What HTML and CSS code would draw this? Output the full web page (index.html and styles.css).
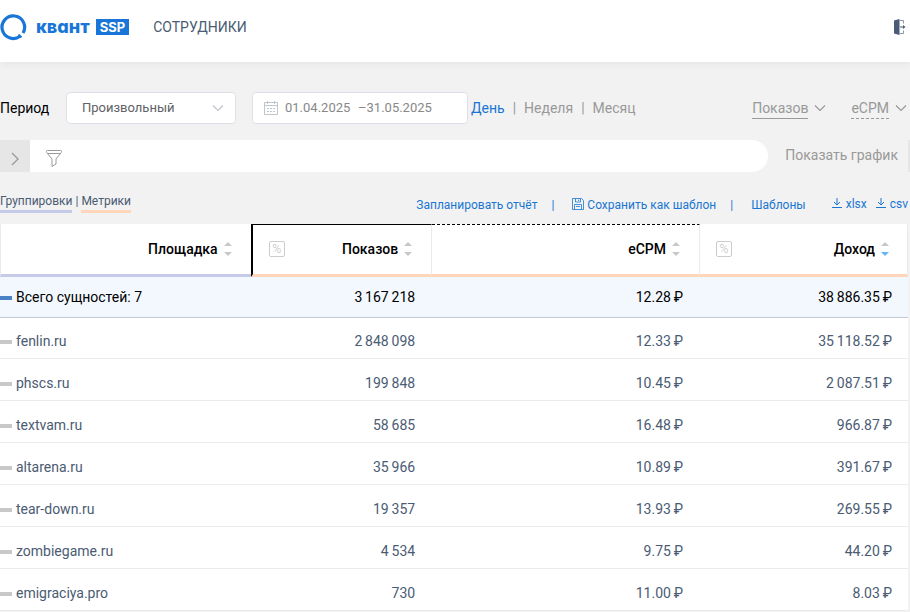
FILE: index.html
```html
<!DOCTYPE html>
<html lang="ru">
<head>
  <meta charset="utf-8">
  <title>Квант SSP</title>
  <meta name="viewport" content="width=device-width, initial-scale=1">
  <link rel="stylesheet" href="styles.css">
</head>
<body>
  <svg width="0" height="0" class="sprite" aria-hidden="true">
    <symbol id="chevron" viewBox="0 0 12 8"><path d="M1 1.5l5 5 5-5" fill="none" stroke="currentColor" stroke-width="1.200"/></symbol>
    <symbol id="download" viewBox="0 0 10 10"><path d="M5 0v7M2 4l3 3 3-3M0 9.500h10" fill="none" stroke="currentColor"/></symbol>
    <symbol id="sort" viewBox="0 0 8 14"><path class="up" d="M0 4L4 0l4 4z"/><path class="down" d="M0 10L4 14l4-4z"/></symbol>
  </svg>

  <header class="header">
    <a href="#" class="logo">
      <svg width="27" height="27" viewBox="0 0 27 27" aria-hidden="true">
        <path d="M20 22.300A11.300 11.300 0 1 1 23 19" fill="none" stroke="#1976d8" stroke-width="3.200"/>
        <path d="M18.500 20.500l3 3" stroke="#1976d8" stroke-width="2"/>
      </svg>
      <span class="logo-name">квɑнт</span>
      <span class="logo-tag">SSP</span>
    </a>
    <a href="#" class="nav-link">СОТРУДНИКИ</a>
    <button class="logout" aria-label="Выйти">
      <svg width="12" height="16" viewBox="0 0 12 16">
        <path d="M0 1.500L5.500 0v16L0 14.500z" fill="#4a5b78"/>
        <path d="M6 1.500h3.500v3M6 14.500h3.500v-3" fill="none" stroke="#8b95a8"/>
        <path d="M6 8h4" stroke="#4a5b78"/>
        <path d="M9 6l2.500 2L9 10z" fill="#4a5b78"/>
      </svg>
    </button>
  </header>

  <main>
    <form class="filters">
      <label for="period">Период</label>
      <div class="select">
        <select id="period"><option>Произвольный</option></select>
        <svg width="12" height="8" aria-hidden="true"><use href="#chevron"/></svg>
      </div>
      <div class="dates">
        <svg width="14" height="14" viewBox="0 0 14 14" fill="none" stroke="#c0c4cc" aria-hidden="true">
          <path d="M.5 1.500h13v12H.5zM1 4.500h12M3.500 0v3M10.500 0v3M3 7.500h2M6 7.500h2M9 7.500h2M3 10.500h2M6 10.500h2M9 10.500h2"/>
        </svg>
        <input type="text" value="01.04.2025" aria-label="Дата начала">
        <span>–</span>
        <input type="text" value="31.05.2025" aria-label="Дата окончания">
      </div>
      <div class="steps">
        <a href="#" class="active">День</a><i>|</i><a href="#">Неделя</a><i>|</i><a href="#">Месяц</a>
      </div>
      <div class="chart-metrics">
        <button type="button"><span>Показов</span><svg width="12" height="8"><use href="#chevron"/></svg></button>
        <button type="button" class="dashed"><span>eCPM</span><svg width="12" height="8"><use href="#chevron"/></svg></button>
      </div>
    </form>

    <div class="search-row">
      <button class="expand" aria-label="Развернуть">
        <svg width="10" height="14" viewBox="0 0 10 14"><path d="M2 1l6 6-6 6" fill="none" stroke="currentColor" stroke-width="1.300"/></svg>
      </button>
      <div class="search">
        <svg width="16" height="17" viewBox="0 0 16 17" fill="none" stroke="#999" aria-hidden="true">
          <path d="M.5 1.500Q.5.5 1.500.5h13q1 0 1 1t-1 2L10 9v5l-4 2.500V9L1.500 3.500q-1-1-1-2zM1.500 3.500h13"/>
        </svg>
        <input type="text" aria-label="Фильтр">
      </div>
      <button class="show-chart">Показать график</button>
    </div>

    <div class="toolbar">
      <div class="legend">
        <a href="#" class="groups">Группировки</a>
        <span>|</span>
        <a href="#" class="metrics">Метрики</a>
      </div>
      <div class="actions">
        <a href="#">Запланировать отчёт</a>
        <i>|</i>
        <a href="#">
          <svg width="12" height="12" viewBox="0 0 12 12" fill="none" stroke="currentColor" stroke-width=".8" aria-hidden="true"><path d="M.5.5h9l2 2v9H.5zM3.500.5v3.500h5V.5M2.500 11.500v-5h7v5M6.500 1.500v1.500M4 8.500h4"/></svg>
          Сохранить как шаблон
        </a>
        <i>|</i>
        <a href="#">Шаблоны</a>
      </div>
      <div class="exports">
        <a href="#"><svg width="10" height="10"><use href="#download"/></svg>xlsx</a>
        <a href="#"><svg width="10" height="10"><use href="#download"/></svg>csv</a>
      </div>
    </div>

    <table class="report">
      <colgroup>
        <col class="col-site"><col class="col-shows"><col class="col-ecpm"><col class="col-income">
      </colgroup>
      <thead>
        <tr>
          <th class="group"><div>Площадка<svg width="8" height="14"><use href="#sort"/></svg></div></th>
          <th class="first-metric"><div><button class="percent">%</button>Показов<svg width="8" height="14"><use href="#sort"/></svg></div></th>
          <th class="second-metric"><div>eCPM<svg width="8" height="14"><use href="#sort"/></svg></div></th>
          <th><div><button class="percent">%</button>Доход<svg width="8" height="14" class="desc"><use href="#sort"/></svg></div></th>
        </tr>
      </thead>
      <tbody>
        <tr class="total"><td>Всего сущностей: 7</td><td>3&thinsp;167&thinsp;218</td><td>12.28&thinsp;₽</td><td>38&thinsp;886.35&thinsp;₽</td></tr>
        <tr><td>fenlin.ru</td><td>2&thinsp;848&thinsp;098</td><td>12.33&thinsp;₽</td><td>35&thinsp;118.52&thinsp;₽</td></tr>
        <tr><td>phscs.ru</td><td>199&thinsp;848</td><td>10.45&thinsp;₽</td><td>2&thinsp;087.51&thinsp;₽</td></tr>
        <tr><td>textvam.ru</td><td>58&thinsp;685</td><td>16.48&thinsp;₽</td><td>966.87&thinsp;₽</td></tr>
        <tr><td>altarena.ru</td><td>35&thinsp;966</td><td>10.89&thinsp;₽</td><td>391.67&thinsp;₽</td></tr>
        <tr><td>tear-down.ru</td><td>19&thinsp;357</td><td>13.93&thinsp;₽</td><td>269.55&thinsp;₽</td></tr>
        <tr><td>zombiegame.ru</td><td>4&thinsp;534</td><td>9.75&thinsp;₽</td><td>44.20&thinsp;₽</td></tr>
        <tr><td>emigraciya.pro</td><td>730</td><td>11.00&thinsp;₽</td><td>8.03&thinsp;₽</td></tr>
      </tbody>
    </table>
  </main>
</body>
</html>
```
FILE: styles.css
```css
* {
  box-sizing: border-box;
}
body {
  margin: 0;
  background: #f2f2f2;
  color: #000;
  font: 14px/20px Roboto, sans-serif;
}
a {
  color: #1976d2;
  text-decoration: none;
}
button,
input,
select {
  padding: 0;
  border: 0;
  background: none;
  color: inherit;
  font: inherit;
}
i {
  font-style: normal;
}
.sprite {
  position: absolute;
}

/* header */
.header {
  display: flex;
  align-items: center;
  height: 62px;
  padding: 0 4px 8px 0;
  background: #fff;
  box-shadow: 0 2px 8px rgba(0, 0, 0, .06);
}
.logo {
  display: flex;
  align-items: center;
  color: #1976d8;
}
.logo-name {
  margin: 0 6px 0 9px;
  font: 800 18px/20px Inter, sans-serif;
}
.logo-tag {
  padding: 0 4px;
  background: #1976d8;
  color: #fff;
  font: 700 13px/16px Inter, sans-serif;
}
.nav-link {
  margin-left: 24px;
  color: #4a5b73;
}
.logout {
  display: flex;
  margin-left: auto;
}

/* period and chart metrics */
.filters {
  display: flex;
  align-items: center;
  padding-top: 30px;
  color: #999;
}
.filters label {
  min-width: 50px;
  color: #000;
}
.select {
  display: flex;
  align-items: center;
  width: 170px;
  height: 32px;
  margin: 0 16px;
  padding-right: 11px;
  border: 1px solid #dcdfe6;
  border-radius: 4px;
  background: #fff;
  color: #c0c4cc;
}
.select select {
  flex: 1;
  padding-left: 15px;
  appearance: none;
  color: #606266;
  font-size: 13px;
}
.dates {
  display: flex;
  align-items: center;
  width: 216px;
  height: 32px;
  padding-left: 11px;
  border: 1px solid #dcdfe6;
  border-radius: 4px;
  background: #fff;
  color: #888;
  font-size: 13px;
}
.dates input {
  width: 73px;
}
.dates svg {
  margin-right: 7px;
}
.steps {
  display: flex;
  gap: 8px;
  margin-left: 3px;
}
.steps a {
  color: #999;
}
.steps .active {
  color: #1976d2;
}
.chart-metrics {
  display: flex;
  gap: 25px;
  margin-left: auto;
  padding-right: 3px;
}
.chart-metrics button {
  display: flex;
  align-items: center;
  gap: 6px;
}
.chart-metrics span {
  border-bottom: 1px solid #999;
}
.chart-metrics .dashed span {
  border-bottom-style: dashed;
}

/* search */
.search-row {
  display: flex;
  height: 32px;
  margin-top: 16px;
  color: #999;
}
.expand {
  display: flex;
  align-items: center;
  justify-content: center;
  width: 30px;
  padding-top: 6px;
  background: #e6e6e6;
}
.search {
  display: flex;
  flex: 1;
  align-items: center;
  padding: 5px 16px 0;
  border-radius: 0 16px 16px 0;
  background: #fff;
}
.search input {
  flex: 1;
}
.show-chart {
  padding: 0 10px 2px 17px;
  border-right: 2px solid #e6e6e6;
}

/* toolbar */
.toolbar {
  display: flex;
  align-items: center;
  height: 52px;
  padding: 8px 2px 0 0;
  font-size: 12px;
}
.legend {
  color: #4a5b73;
}
.legend a {
  display: inline-block;
  color: #4a5b73;
  line-height: 18px;
  border-bottom: 3px solid #c5cae9;
}
.legend .metrics {
  border-color: #ffd6ba;
}
.actions {
  display: flex;
  margin: 5px 26px 0 auto;
}
.actions i {
  margin: 0 18px 0 14px;
}
.actions,
.exports {
  color: #1976d2;
}
.actions svg {
  vertical-align: -1px;
}
.exports {
  display: flex;
  gap: 9px;
  margin-top: 3px;
}
.exports svg {
  margin-right: 4px;
}

/* report */
.report {
  width: calc(100% - 2px);
  table-layout: fixed;
  border-collapse: separate;
  border-spacing: 0;
  background: #fff;
  color: #4a5b73;
}
.col-site {
  width: 27.6%;
}
.col-shows {
  width: 20%;
}
.col-ecpm {
  width: 29.5%;
}
.report th {
  height: 53px;
  padding: 0 19px 2px 16px;
  border-top: 1px solid #fff;
  border-right: 1px solid #ebebeb;
  border-bottom: 3px solid #ffd6ba;
  color: #000;
  font-weight: 500;
}
.report th:last-child {
  padding-right: 18px;
}
.report th div {
  display: flex;
  align-items: center;
  justify-content: flex-end;
  gap: 6px;
}
.report .group {
  border-left: 1px solid #ebebeb;
  border-right: 0;
  border-bottom-color: #c5cae9;
}
.report .first-metric {
  border-top-color: #000;
  border-left: 2px solid #000;
}
.report .second-metric {
  border-top: 1px dashed #000;
}
.report th svg {
  fill: #c8c8c8;
}
.desc {
  --down: #64b5f6;
}
.down {
  fill: var(--down, #c8c8c8);
}
.percent {
  width: 16px;
  height: 16px;
  margin-right: auto;
  border: 1px solid #ccc;
  border-radius: 2px;
  color: #bbb;
  font-size: 12px;
  font-weight: 300;
  line-height: 14px;
}
.report td {
  height: 42px;
  padding: 6px 17px 0 0;
  border-bottom: 1px solid #ebebeb;
  text-align: right;
}
.report td:first-child {
  text-align: left;
}
.report td:last-child {
  padding-right: 16px;
}
.report td:first-child::before {
  content: "";
  display: inline-block;
  width: 12px;
  height: 4px;
  margin-right: 4px;
  background: #c8c8c8;
  vertical-align: 2px;
}
.report .total td {
  height: 41px;
  padding-top: 0;
  border-color: #c3cbd6;
  background: #f3f8ff;
  color: #000;
}
.report .total + tr td {
  height: 41px;
}
.report .total td:first-child::before {
  background: #4a82c4;
}
```
